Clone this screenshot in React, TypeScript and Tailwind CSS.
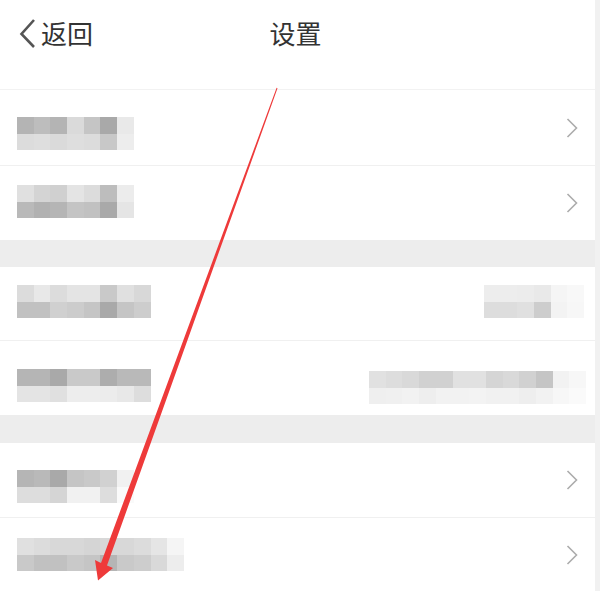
import React from 'react'

// pixelated (mosaic) label: two rows of grey squares
type Mosaic = { top: string[]; bottom: string[] }

function Cells({ data, className = '' }: { data: Mosaic; className?: string }) {
  return (
    <div className={'flex flex-col ' + className}>
      {[data.top, data.bottom].map((line, i) => (
        <div key={i} className="flex">
          {line.map((c, j) => (
            <div key={j} className="h-[16.6px] w-[16.7px]" style={{ backgroundColor: c }} />
          ))}
        </div>
      ))}
    </div>
  )
}

function Chevron() {
  return (
    <svg width="12" height="20" viewBox="0 0 12 20" className="mr-[17px]">
      <polyline points="1.5,1 10.5,10 1.5,19" fill="none" stroke="#acacac" strokeWidth="1.6" />
    </svg>
  )
}

type Row = {
  h: string
  pad: string
  left: Mosaic
  line?: boolean
  right?: React.ReactNode
}

const rows1: Row[] = [
  {
    h: 'h-[75px]',
    pad: 'pt-[27px]',
    left: {
      top: ['#b4b4b4', '#bdbdbd', '#b4b4b4', '#dadada', '#c5c5c5', '#a9a9a9', '#e9e9e9'],
      bottom: ['#dcdcdc', '#dedede', '#dadada', '#dedede', '#dcdcdc', '#c8c8c8', '#ededed'],
    },
    right: <Chevron />,
  },
  {
    h: 'h-[75px]',
    pad: 'pt-[19px]',
    line: true,
    left: {
      top: ['#e0e0e0', '#d4d4d4', '#d0d0d0', '#e4e4e4', '#dcdcdc', '#bdbdbd', '#ececec'],
      bottom: ['#b9b9b9', '#b1b1b1', '#b5b5b5', '#c4c4c4', '#c1c1c1', '#a9a9a9', '#e5e5e5'],
    },
    right: <Chevron />,
  },
]

const rows2: Row[] = [
  {
    h: 'h-[73px]',
    pad: 'pt-[18px]',
    left: {
      top: ['#dcdcdc', '#e8e8e8', '#dcdcdc', '#e4e4e4', '#e4e4e4', '#c9c9c9', '#e0e0e0', '#d8d8d8'],
      bottom: ['#c1c1c1', '#c1c1c1', '#d0d0d0', '#cccccc', '#c5c5c5', '#a9a9a9', '#c5c5c5', '#cdcdcd'],
    },
    right: (
      <div className="mr-[11px] flex items-start self-start pt-[18px]">
        <Cells
          data={{
            top: ['#ededed', '#ededed', '#ececec', '#e9e9e9', '#f5f5f5', '#f8f8f8'],
            bottom: ['#dddddd', '#dddddd', '#e0e0e0', '#cdcdcd', '#f3f3f3', '#f7f7f7'],
          }}
        />
      </div>
    ),
  },
  {
    h: 'h-[75px]',
    pad: 'pt-[28px]',
    line: true,
    left: {
      top: ['#b5b5b5', '#b5b5b5', '#a9a9a9', '#c9c9c9', '#c9c9c9', '#adadad', '#b9b9b9', '#b9b9b9'],
      bottom: ['#e4e4e4', '#e4e4e4', '#e0e0e0', '#ededed', '#ededed', '#ececec', '#e8e8e8', '#dddddd'],
    },
    right: (
      <div className="mr-[9px] flex items-start self-start pt-[30px]">
        <Cells
          data={{
            top: ['#e1e1e1', '#dddddd', '#d9d9d9', '#d1d1d1', '#d1d1d1', '#e1e1e1', '#e1e1e1', '#d5d5d5', '#d9d9d9', '#d1d1d1', '#c5c5c5', '#f2f2f2', '#f7f7f7'],
            bottom: ['#efefef', '#f0f0f0', '#f2f2f2', '#eeeeee', '#f2f2f2', '#f2f2f2', '#f3f3f3', '#f1f1f1', '#f1f1f1', '#eeeeee', '#f2f2f2', '#f7f7f7', '#fafafa'],
          }}
        />
      </div>
    ),
  },
]

const rows3: Row[] = [
  {
    h: 'h-[74px]',
    pad: 'pt-[27px]',
    left: {
      top: ['#b5b5b5', '#b9b9b9', '#a9a9a9', '#c5c5c5', '#c9c9c9', '#d1d1d1', '#f1f1f1'],
      bottom: ['#dddddd', '#dddddd', '#d5d5d5', '#f1f1f1', '#f1f1f1', '#dddddd', '#fafafa'],
    },
    right: <Chevron />,
  },
  {
    h: 'h-[74px]',
    pad: 'pt-[20px]',
    line: true,
    left: {
      top: ['#e0e0e0', '#dcdcdc', '#d8d8d8', '#d8d8d8', '#d5d5d5', '#d8d8d8', '#d8d8d8', '#dcdcdc', '#e5e5e5', '#f5f5f5'],
      bottom: ['#c9c9c9', '#c1c1c1', '#c1c1c1', '#c9c9c9', '#c5c5c5', '#b5b5b5', '#c9c9c9', '#cdcdcd', '#d9d9d9', '#ededed'],
    },
    right: <Chevron />,
  },
]

function ListRow({ row }: { row: Row }) {
  return (
    <div
      className={
        'flex items-center justify-between bg-white ' +
        row.h +
        (row.line ? ' border-t border-[#f0f0f0]' : '')
      }
    >
      <div className={'self-start pl-[17px] ' + row.pad}>
        <Cells data={row.left} />
      </div>
      {row.right}
    </div>
  )
}

function Group({ rows }: { rows: Row[] }) {
  return (
    <div className="flex flex-col">
      {rows.map((r, i) => (
        <ListRow key={i} row={r} />
      ))}
    </div>
  )
}

export default function App() {
  return (
    <div
      className="relative h-[591px] w-[600px] overflow-hidden border-r-[5px] border-[#f1f1f1] bg-white"
      style={{ fontFamily: '"Noto Sans CJK SC", "Noto Sans", sans-serif' }}
    >
      <header className="grid h-[90px] grid-cols-3 items-start border-b border-[#f2f2f2] pt-[16px]">
        <div className="flex items-center pl-[18px] text-[#333]">
          <svg width="20" height="32" viewBox="0 0 20 32">
            <polyline points="16,3 3.5,17 16,30" fill="none" stroke="#555" strokeWidth="2.6" />
          </svg>
          <span className="ml-[3px] text-[26px] leading-[34px]">返回</span>
        </div>
        <div className="pr-[4px] text-center text-[26px] leading-[34px] text-[#333]">设置</div>
        <div />
      </header>

      <Group rows={rows1} />
      <div className="h-[27px] bg-[#ededed]" />
      <Group rows={rows2} />
      <div className="h-[28px] bg-[#ededed]" />
      <Group rows={rows3} />

      {/* red arrow drawn over the screenshot */}
      <svg className="pointer-events-none absolute left-0 top-0" width="600" height="591" viewBox="0 0 600 591">
        <polygon
          points="276.6,87.8 277.5,88.2 107,565.5 113,568 98,580.5 95,560 101,563"
          fill="#ee3a3a"
        />
      </svg>
    </div>
  )
}
